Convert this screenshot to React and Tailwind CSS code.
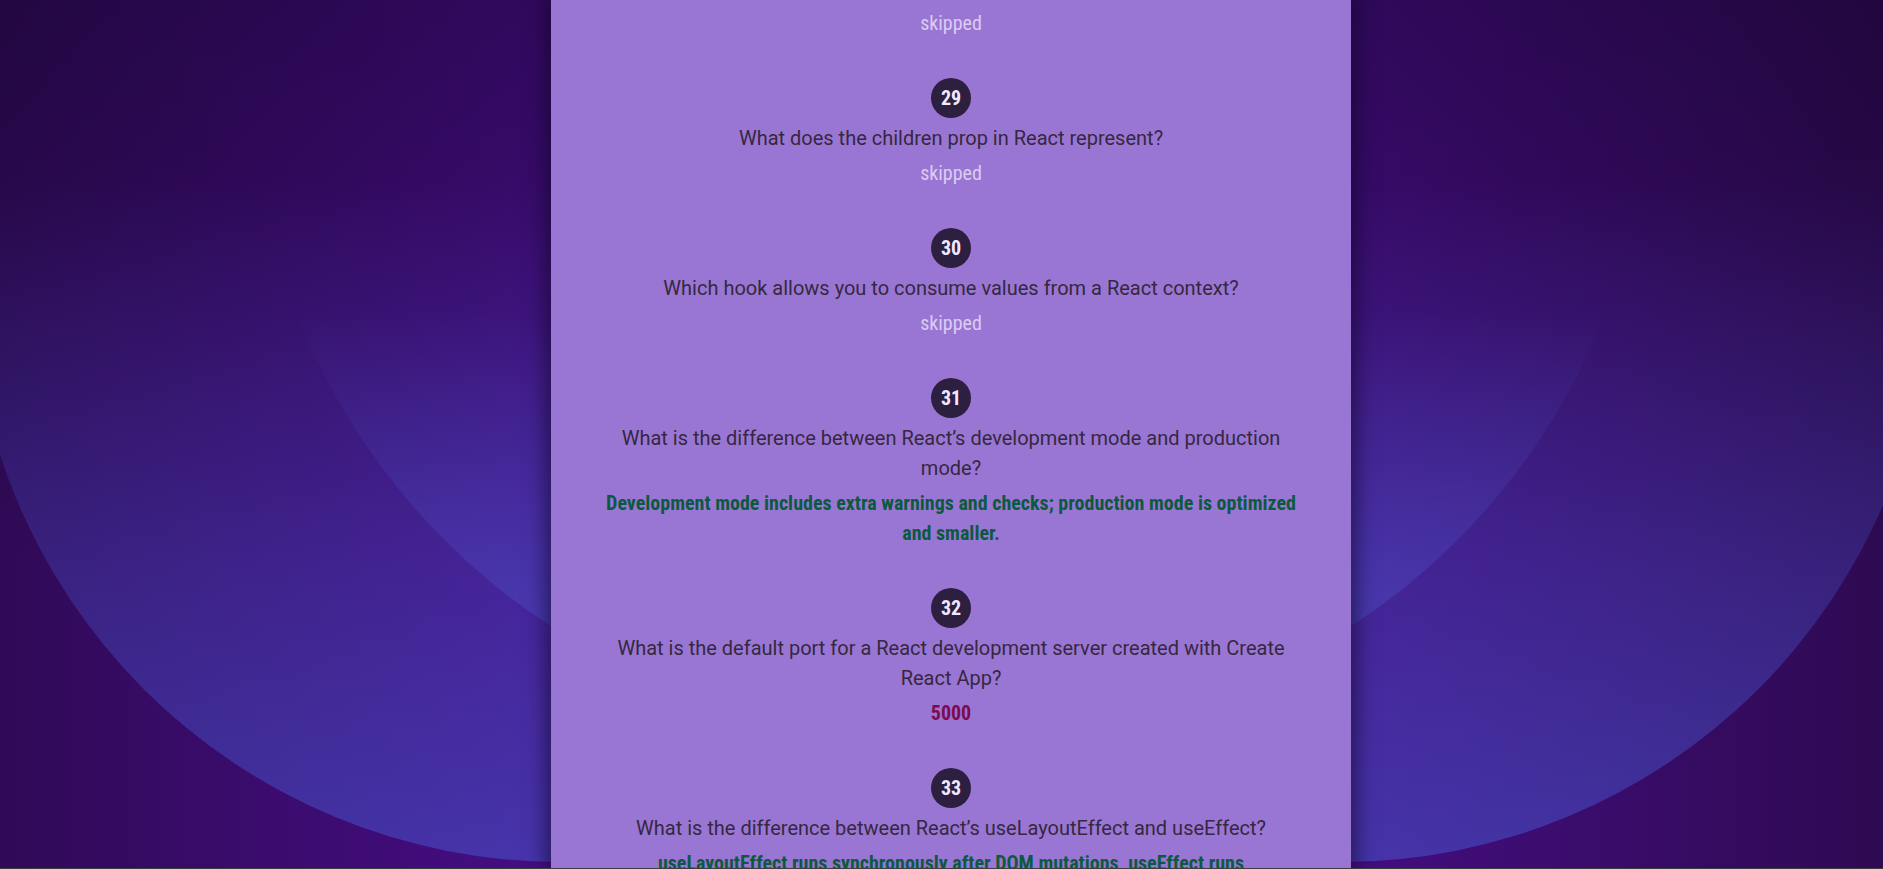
const items = [
  {
    n: 28,
    q: "Which method is used to update state in a class component?",
    a: "skipped",
    kind: "skipped",
  },
  {
    n: 29,
    q: "What does the children prop in React represent?",
    a: "skipped",
    kind: "skipped",
  },
  {
    n: 30,
    q: "Which hook allows you to consume values from a React context?",
    a: "skipped",
    kind: "skipped",
  },
  {
    n: 31,
    q: "What is the difference between React’s development mode and production mode?",
    a: "Development mode includes extra warnings and checks; production mode is optimized and smaller.",
    kind: "correct",
  },
  {
    n: 32,
    q: "What is the default port for a React development server created with Create React App?",
    a: "5000",
    kind: "wrong",
  },
  {
    n: 33,
    q: "What is the difference between React’s useLayoutEffect and useEffect?",
    a: "useLayoutEffect runs synchronously after DOM mutations, useEffect runs asynchronously after paint.",
    kind: "correct",
  },
];

const answerColor = {
  skipped: "font-normal text-[#dccbf3]",
  correct: "font-bold text-[#0b5a3d]",
  wrong: "font-bold text-[#7d0b4e]",
};

const condensed =
  "font-['Roboto_Condensed','Liberation_Sans_Narrow','DejaVu_Sans_Condensed',Roboto,sans-serif] [font-stretch:condensed]";

const ResultItem = ({ item }) => (
  <div className="flex flex-col items-center pb-[40px] text-center">
    <div
      className={`flex h-10 w-10 items-center justify-center rounded-full bg-[#2d1f3f] text-[20px] font-bold text-[#f1e9ff] ${condensed}`}
    >
      {item.n}
    </div>
    <p className="mt-[5px] font-['Roboto',sans-serif] text-[20px] leading-[30px] text-[#35283f]">
      {item.q}
    </p>
    <p
      className={`mt-[5px] text-[20px] leading-[30px] ${condensed} ${answerColor[item.kind]}`}
    >
      {item.a}
    </p>
  </div>
);

export default function App() {
  return (
    <div className="relative flex h-[869px] w-full flex-col overflow-hidden bg-[linear-gradient(to_bottom,rgba(10,0,25,0.35),rgba(10,0,25,0)_65%),linear-gradient(to_right,#300a58,#5510a2_50%,#2e0a52)]">
      {/* background arcs */}
      <div className="pointer-events-none absolute left-[-29px] top-[-318px] h-[1180px] w-[1960px] rounded-full bg-[linear-gradient(to_bottom,rgba(70,80,200,0)_42%,rgba(72,84,205,0.55)_100%)]" />
      <div className="pointer-events-none absolute left-[251px] top-[-587px] h-[1320px] w-[1400px] rounded-full bg-[linear-gradient(to_bottom,rgba(80,100,220,0)_68%,rgba(80,100,220,0.4)_100%)]" />

      <div className="relative flex flex-1 justify-center overflow-hidden pl-[19px]">
        <div className="h-full w-[800px] bg-[#9a76d4] px-[50px] shadow-[0_0_18px_6px_rgba(15,5,35,0.55)]">
          <div className="-mt-[72px]">
            {items.map((item) => (
              <ResultItem key={item.n} item={item} />
            ))}
          </div>
        </div>
      </div>
      <div className="relative h-px bg-[#3d3d3d]" />
    </div>
  );
}
